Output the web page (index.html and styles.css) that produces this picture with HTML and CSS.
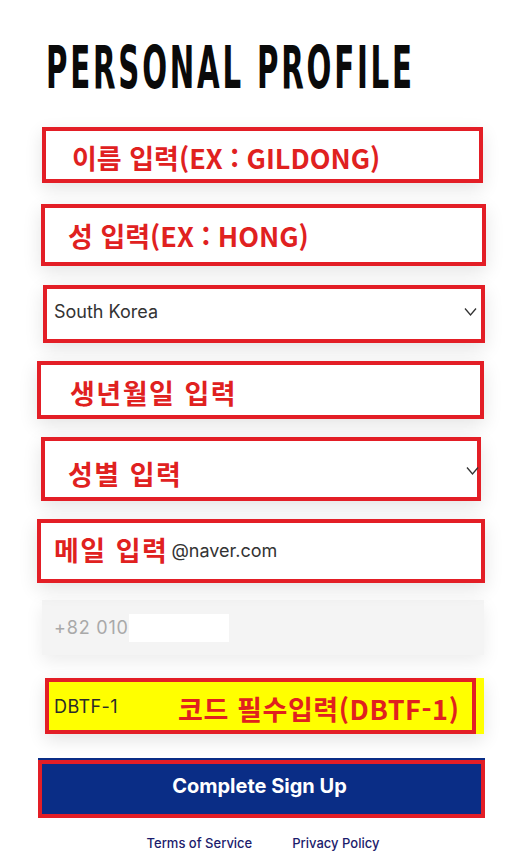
FILE: index.html
```html
<!DOCTYPE html>
<html lang="ko">
<head>
<meta charset="utf-8">
<title>Personal Profile</title>
<link rel="stylesheet" href="styles.css">
</head>
<body>
<main class="page">
  <h1 class="title"><span class="title-text">PERSONAL PROFILE</span></h1>

  <div class="field field-name"><span class="note">이름 입력(EX : GILDONG)</span></div>

  <div class="field field-last"><span class="note">성 입력(EX : HONG)</span></div>

  <div class="field field-country">
    <span class="value">South Korea</span>
    <svg class="chevron" width="13" height="9" viewBox="0 0 13 9"><path d="M1 1.5 L6.5 8 L12 1.5" fill="none" stroke="#333" stroke-width="1.3"/></svg>
  </div>

  <div class="field field-birth"><span class="note note-lg">생년월일 입력</span></div>

  <div class="field field-gender">
    <span class="note note-lg">성별 입력</span>
    <svg class="chevron chevron-gender" width="13" height="9" viewBox="0 0 13 9"><path d="M1 1.5 L6.5 8 L12 1.5" fill="none" stroke="#333" stroke-width="1.3"/></svg>
  </div>

  <div class="field field-email"><span class="note note-lg">메일 입력</span><span class="value">@naver.com</span></div>

  <div class="phone"><span class="phone-prefix">+82 010</span><span class="mask"></span></div>

  <div class="code">
    <div class="code-box"><span class="code-value">DBTF-1</span><span class="note code-note">코드 필수입력(DBTF-1)</span></div>
  </div>

  <div class="submit"><span>Complete Sign Up</span></div>

  <nav class="links"><a href="#">Terms of Service</a><a href="#">Privacy Policy</a></nav>
</main>
</body>
</html>
```

FILE: styles.css
```css
* { box-sizing: border-box; }
html, body { margin: 0; padding: 0; background: #ffffff; }
body { font-family: Inter, "Noto Sans", "Noto Sans CJK KR", sans-serif; }

.page {
  width: 520px;
  padding-top: 40px;
  display: flex;
  flex-direction: column;
}

.title {
  margin: 0 0 0 46px;
  height: 58px;
  font-family: "DejaVu Sans Condensed", "DejaVu Sans", sans-serif;
  font-stretch: condensed;
  font-weight: 700;
  font-size: 32.5px;
  line-height: 32.5px;
  color: #0a0a0a;
  white-space: nowrap;
}
.title-text {
  display: block;
  height: 32.5px;
  transform: scaleY(1.785);
  transform-origin: left top;
  letter-spacing: 2.8px;
}

.field {
  display: flex;
  align-items: center;
  background: #fff;
  border: 4px solid #e31e26;
  box-shadow: 0 6px 18px rgba(0, 0, 0, 0.11);
  position: relative;
}

.note {
  font-family: "Noto Sans CJK KR", "Noto Sans", sans-serif;
  font-weight: 700;
  color: #e0211f;
  font-size: 27px;
  line-height: 1;
  white-space: nowrap;
}
.note-lg { letter-spacing: 1.5px; }

.value {
  font-family: Inter, "Noto Sans", sans-serif;
  font-size: 18px;
  color: #333;
}

.field-name { margin: 29px 0 0 42px; width: 441px; height: 56px; padding-left: 26px; padding-top: 5px; }
.field-last { margin: 21px 0 0 41px; width: 445px; height: 62px; padding-left: 23px; }
.field-country { margin: 19px 0 0 43px; width: 442px; height: 58px; padding: 0 4px 5px 7px; justify-content: space-between; }
.field-birth { margin: 18px 0 0 37px; width: 447px; height: 58px; padding-left: 29px; padding-top: 4px; }
.field-gender { margin: 18px 0 0 41px; width: 440px; height: 64px; padding-left: 23px; padding-top: 9px; }
.field-email { margin: 18px 0 0 37px; width: 448px; height: 64px; padding-left: 13px; padding-bottom: 4px; }
.field-email .value { margin-left: 3px; margin-top: 2px; }

.chevron { display: block; }
.chevron-gender { position: absolute; right: -2px; top: 25px; }

.phone {
  margin: 17px 0 0 42px;
  width: 442px;
  height: 55px;
  background: #f4f4f4;
  box-shadow: 0 6px 18px rgba(0, 0, 0, 0.08);
  display: flex;
  align-items: center;
  padding-left: 12px;
}
.phone-prefix {
  font-family: Inter, "Noto Sans", sans-serif;
  font-size: 18px;
  letter-spacing: 0.8px;
  color: #a9a9a9;
}
.mask {
  display: block;
  width: 100px;
  height: 28px;
  background: #ffffff;
  margin-top: 1px;
}

.code {
  margin: 23px 0 0 45px;
  width: 439px;
  height: 56px;
  background: #ffff00;
  box-shadow: 0 6px 18px rgba(0, 0, 0, 0.11);
  display: flex;
}
.code-box {
  width: 431px;
  height: 56px;
  border: 4px solid #e31e26;
  display: flex;
  align-items: center;
  padding-left: 5px;
}
.code-value {
  font-family: Inter, "Noto Sans", sans-serif;
  font-size: 18px;
  letter-spacing: 0.4px;
  color: #2a2a2a;
  width: 124px;
}
.code-note { margin-top: 4px; letter-spacing: 0.6px; }

.submit {
  margin: 26px 0 0 38px;
  width: 447px;
  height: 58px;
  background: #0a2d86;
  border: 4px solid #e31e26;
  box-shadow: 0 -2px 0 #0a2d86;
  display: flex;
  align-items: center;
  justify-content: center;
  padding-bottom: 6px;
}
.submit span {
  font-family: Inter, "Noto Sans", sans-serif;
  font-weight: 700;
  font-size: 20px;
  color: #ffffff;
  margin-left: -4px;
}

.links {
  margin: 17px 0 0 0;
  display: flex;
  justify-content: center;
  gap: 40px;
  padding-left: 6px;
}
.links a {
  font-family: Inter, "Noto Sans", sans-serif;
  font-size: 13px;
  font-weight: 500;
  color: #1c1c6c;
  text-decoration: none;
}
```
